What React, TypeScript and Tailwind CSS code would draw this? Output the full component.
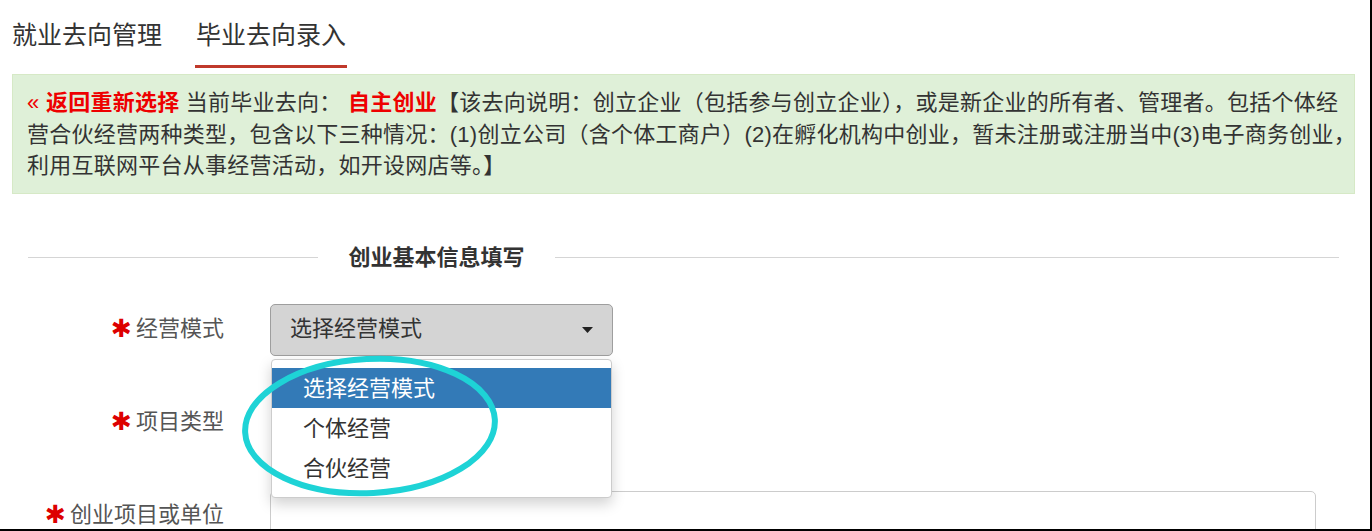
import React from 'react'

const cjk = { fontFamily: '"Liberation Sans", "Noto Sans CJK SC", sans-serif' }

// ─── Required-field label ───────────────────────────────────────────────────
function FieldLabel({ text, className = '' }: { text: string; className?: string }) {
  return (
    <div className={`w-[224px] flex-shrink-0 flex items-center justify-end gap-[4px] text-[22px] text-[#555] ${className}`}>
      <span className="text-[#d00] text-[25px] leading-none font-bold" style={{ fontFamily: '"DejaVu Sans", sans-serif' }}>
        ✱
      </span>
      <span>{text}</span>
    </div>
  )
}

export default function App() {
  return (
    <div className="w-[1372px] h-[531px] bg-white overflow-hidden border-r-2 border-b-2 border-black relative" style={cjk}>
      {/* Tabs */}
      <div className="flex items-end h-[68px] pl-[11px] gap-[32px] text-[25px] text-[#333]">
        <div className="pb-[14px] px-px">就业去向管理</div>
        <div className="pb-[11px] px-px border-b-[3px] border-[#c0392b]">毕业去向录入</div>
      </div>

      {/* Notice */}
      <div className="mt-[6px] ml-[12px] w-[1343px] h-[120px] bg-[#dff0d8] border border-[#d6e9c6] px-[14px] pt-[12px] text-[22px] leading-[31.5px] text-[#333] tracking-[0.25px]">
        <div className="whitespace-nowrap">
          <span className="text-[#e00]">«</span>{' '}
          <b className="text-[#e00]">返回重新选择</b> 当前毕业去向：{' '}
          <b className="text-[#e00]">自主创业</b>【该去向说明：创立企业（包括参与创立企业），或是新企业的所有者、管理者。包括个体经
        </div>
        <div className="whitespace-nowrap">
          营合伙经营两种类型，包含以下三种情况：(1)创立公司（含个体工商户）(2)在孵化机构中创业，暂未注册或注册当中(3)电子商务创业，
        </div>
        <div className="whitespace-nowrap">利用互联网平台从事经营活动，如开设网店等。】</div>
      </div>

      {/* Section title */}
      <div className="flex items-center mt-[50px] ml-[28px] w-[1311px] h-[26px]">
        <div className="w-[290px] h-px bg-[#d5d5d5]" />
        <div className="w-[237px] text-center text-[22px] font-bold text-[#333]">创业基本信息填写</div>
        <div className="flex-1 h-px bg-[#d5d5d5]" />
      </div>

      {/* Form */}
      <div className="mt-[34px] flex flex-col gap-[41px]">
        <div className="flex items-center">
          <FieldLabel text="经营模式" className="-translate-y-[2px]" />
          <div className="ml-[46px] w-[343px] h-[52px] bg-[#d4d4d4] border border-[#9e9e9e] rounded-[5px] flex items-center justify-between pl-[19px] pr-[19px] text-[22px] text-[#333]">
            <span className="-mt-[3px]">选择经营模式</span>
            <svg width="11" height="6" viewBox="0 0 11 6">
              <path d="M0 0 L11 0 L5.5 6 Z" fill="#222" />
            </svg>
          </div>
        </div>
        <div className="flex items-center h-[52px] -mt-[2px]">
          <FieldLabel text="项目类型" />
        </div>
        <div className="flex items-center">
          <FieldLabel text="创业项目或单位" />
          <div className="ml-[46px] w-[1046px] h-[52px] bg-white border border-[#ccc] rounded-[5px] translate-y-[3px]" />
        </div>
      </div>

      {/* Open dropdown menu */}
      <div className="absolute left-[271px] top-[359px] w-[341px] h-[139px] bg-white border border-[#ccc] rounded-[4px] shadow-[0_6px_14px_rgba(0,0,0,0.18)] py-[8px] text-[22px]">
        <div className="h-[40px] bg-[#337ab7] text-white pl-[31px] flex items-center">选择经营模式</div>
        <div className="h-[40px] text-[#333] pl-[31px] flex items-center">个体经营</div>
        <div className="h-[40px] text-[#333] pl-[31px] flex items-center">合伙经营</div>
      </div>

      {/* Annotation ring */}
      <svg className="absolute left-[236px] top-[350px] pointer-events-none" width="270" height="152" viewBox="0 0 270 152">
        <ellipse cx="134" cy="76" rx="125" ry="67" fill="none" stroke="#1ed3d6" strokeWidth="6" transform="rotate(-3 134 76)" />
      </svg>
    </div>
  )
}
